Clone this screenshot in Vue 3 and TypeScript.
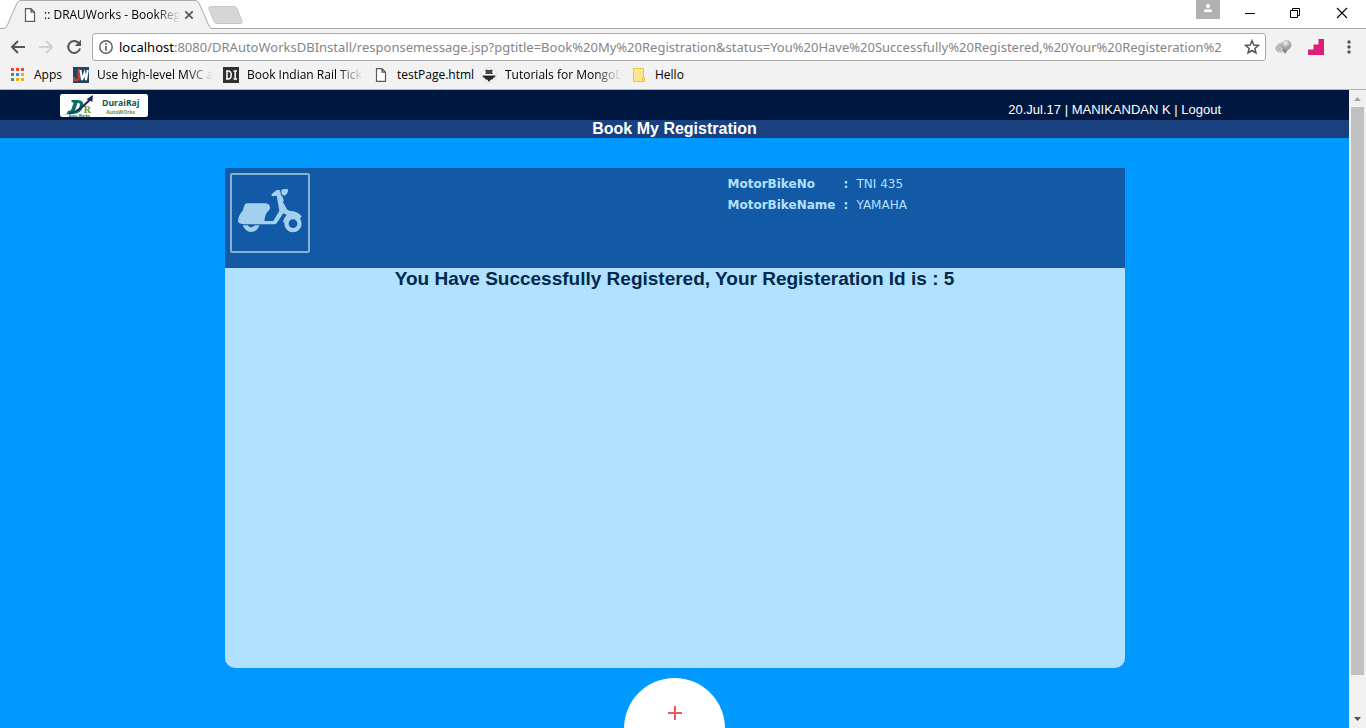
<script setup lang="ts">
interface Detail {
  label: string
  value: string
}

const address = {
  host: 'localhost',
  rest: ':8080/DRAutoWorksDBInstall/responsemessage.jsp?pgtitle=Book%20My%20Registration&status=You%20Have%20Successfully%20Registered,%20Your%20Registeration%2',
}

const details: Detail[] = [
  { label: 'MotorBikeNo', value: 'TNI 435' },
  { label: 'MotorBikeName', value: 'YAMAHA' },
]

const appDots = ['#ea4335', '#ea4335', '#ea4335', '#34a05a', '#2d8cf0', '#f9ab00', '#34a05a', '#f9ab00', '#f9ab00']
</script>

<template>
  <div class="window">
    <header class="tabs">
      <div class="tab">
        <svg class="tab-shape" viewBox="0 0 212 29" width="212" height="29" aria-hidden="true">
          <path d="M0 28.5H3Q6 28.5 7 26L17 3Q18 .5 21 .5H195Q198 .5 199 3L209 26Q210 28.5 212 28.5V29H0Z" fill="#f2f2f2" />
          <path d="M0 28.5H3Q6 28.5 7 26L17 3Q18 .5 21 .5H195Q198 .5 199 3L209 26Q210 28.5 212 28.5" fill="none" stroke="#a9a9a9" />
        </svg>
        <svg class="page-icon" viewBox="0 0 12 14" width="12" height="14" aria-hidden="true"><path d="M1.5.7H7L10.5 4.2V13.3H1.5ZM7 .7V4.2H10.5" fill="#fff" stroke="#5a5a5a" stroke-width="1.2" /></svg>
        <span class="tab-title">:: DRAUWorks - BookReg</span>
        <button class="tab-close" aria-label="Close tab">
          <svg viewBox="0 0 10 10" width="10" height="10"><path d="M1.3 1.3L8.7 8.7M8.7 1.3L1.3 8.7" stroke="#5a5a5a" stroke-width="1.8" /></svg>
        </button>
      </div>
      <button class="new-tab" aria-label="New tab">
        <svg viewBox="0 0 36 18" width="36" height="18"><path d="M3 .5H26Q28 .5 29 2.500L34 15Q35 17.500 32 17.500H9Q7 17.500 6 15.500L1 3Q0 .5 3 .5Z" fill="#d6d6d6" stroke="#c6c6c6" /></svg>
      </button>
      <div class="window-buttons">
        <button class="user" aria-label="Profile">
          <svg viewBox="0 0 24 19" width="24" height="19"><circle cx="12" cy="6" r="2.100" fill="#fff" /><path d="M8 12V10.800Q8 9 12 9T16 10.800V12Z" fill="#fff" /></svg>
        </button>
        <button class="control" aria-label="Minimize"><svg viewBox="0 0 12 12" width="12" height="12"><path d="M1 6.500H11" stroke="#000" /></svg></button>
        <button class="control" aria-label="Restore"><svg viewBox="0 0 12 12" width="12" height="12"><path d="M1.500 3.500H8.500V10.500H1.500ZM3.500 3V1.500H10.500V8.500H9" fill="none" stroke="#000" /></svg></button>
        <button class="control" aria-label="Close"><svg viewBox="0 0 12 12" width="12" height="12"><path d="M1 1L11 11M11 1L1 11" stroke="#000" stroke-width="1.100" /></svg></button>
      </div>
    </header>

    <div class="toolbar">
      <button class="nav" aria-label="Back"><svg viewBox="0 0 16 16" width="16" height="16"><path d="M15 8H2.500M8 2L2 8L8 14" fill="none" stroke="#555" stroke-width="2" /></svg></button>
      <button class="nav" aria-label="Forward"><svg viewBox="0 0 16 16" width="16" height="16"><path d="M1 8H13.500M8 2L14 8L8 14" fill="none" stroke="#d0d0d0" stroke-width="2" /></svg></button>
      <button class="nav" aria-label="Reload"><svg viewBox="0 0 16 16" width="16" height="16"><path d="M12.600 3.800A6 6 0 1 0 14 9.500" fill="none" stroke="#555" stroke-width="2" /><path d="M15 .8V7H8.800Z" fill="#555" /></svg></button>
      <div class="omnibox">
        <svg class="info" viewBox="0 0 14 14" width="14" height="14" aria-hidden="true"><circle cx="7" cy="7" r="6.200" fill="none" stroke="#5a5a5a" stroke-width="1.400" /><path d="M7 6V10.800M7 3.200V4.900" stroke="#5a5a5a" stroke-width="1.600" /></svg>
        <div class="url"><span class="host">{{ address.host }}</span>{{ address.rest }}</div>
        <button class="star" aria-label="Bookmark this page"><svg viewBox="0 0 16 16" width="16" height="16"><path d="M8 1.700L9.800 6L14.400 6.400L10.900 9.400L12 14L8 11.500L4 14L5.100 9.400L1.600 6.400L6.200 6Z" fill="none" stroke="#555" stroke-width="1.500" /></svg></button>
      </div>
      <button class="extension" aria-label="Extension">
        <svg viewBox="0 0 18 16" width="18" height="16">
          <defs><radialGradient id="ball" cx=".4" cy=".3"><stop offset="0" stop-color="#f4f4f4" /><stop offset="1" stop-color="#a0a0a0" /></radialGradient></defs>
          <ellipse cx="6.500" cy="8.500" rx="5.800" ry="4.300" transform="rotate(-22 6.500 8.500)" fill="#c8c8c8" stroke="#a5a5a5" stroke-width=".7" />
          <path d="M2 9.500Q5 5 9 7M3 11Q6 7 10 9" fill="none" stroke="#999" stroke-width=".8" />
          <path d="M7 10L10 15L13.500 10Z" fill="#858585" /><circle cx="11.500" cy="6" r="4.900" fill="url(#ball)" />
        </svg>
      </button>
      <button class="extension stairs" aria-label="Steps extension"><svg viewBox="0 0 16 16" width="16" height="16"><path d="M0 16V10.500H5.500V5.500H10.500V0H16V16Z" fill="#db1f78" /></svg></button>
      <button class="menu" aria-label="Menu"><svg viewBox="0 0 4 14" width="4" height="14"><circle cx="2" cy="2" r="1.700" fill="#555" /><circle cx="2" cy="7" r="1.700" fill="#555" /><circle cx="2" cy="12" r="1.700" fill="#555" /></svg></button>
    </div>

    <nav class="bookmarks" aria-label="Bookmarks">
      <a class="bookmark apps" href="#">
        <svg viewBox="0 0 13 13" width="13" height="13" aria-hidden="true"><rect v-for="(color, i) in appDots" :key="i" :x="(i % 3) * 5" :y="Math.floor(i / 3) * 5" width="3" height="3" :fill="color" /></svg>
        <span>Apps</span>
      </a>
      <a class="bookmark mvc" href="#">
        <svg viewBox="0 0 16 16" width="16" height="16" aria-hidden="true"><rect width="16" height="16" fill="#1f4664" /><path d="M1.200 10V13H3.800Q5.800 13 5.800 10.500V2" fill="none" stroke="#cf3c36" stroke-width="2.200" /><path d="M7.500 3L9 13L11.500 6L13 13L14.800 3" fill="none" stroke="#fff" stroke-width="2" /></svg>
        <span class="clip">Use high-level MVC a</span>
      </a>
      <a class="bookmark rail" href="#">
        <svg viewBox="0 0 16 16" width="16" height="16" aria-hidden="true"><rect width="16" height="16" fill="#303030" /><path d="M3 4H5Q8.200 4 8.200 8T5 12H3M4 4V12M10.500 4H14M12.200 4V12M10.500 12H14" fill="none" stroke="#fff" stroke-width="1.500" /></svg>
        <span class="clip">Book Indian Rail Ticke</span>
      </a>
      <a class="bookmark test" href="#">
        <svg viewBox="0 0 12 14" width="12" height="14" aria-hidden="true"><path d="M1.500.7H7L10.500 4.200V13.300H1.500ZM7 .7V4.200H10.500" fill="#fff" stroke="#5a5a5a" stroke-width="1.200" /></svg>
        <span>testPage.html</span>
      </a>
      <a class="bookmark mongo" href="#">
        <svg viewBox="0 0 16 16" width="16" height="16" aria-hidden="true"><circle cx="8" cy="8" r="7.500" fill="#fff" stroke="#ccc" stroke-width=".5" /><path d="M4 3.500L5.500 2.500L8 3L10.500 2.500L12 3.500L11 5L12 7H4L5 5Z" fill="#444" /><path d="M1.500 8.500H14.500L14 10.500H12.800L11.500 12.500H10L8 15L6 12.500H4.500L3.200 10.500H2Z" fill="#292929" /></svg>
        <span class="clip">Tutorials for MongoD</span>
      </a>
      <a class="bookmark hello" href="#">
        <svg viewBox="0 0 12 14" width="12" height="14" aria-hidden="true"><path d="M.5.5H10.500V10H11.500V13.500H.5Z" fill="#ffe58f" stroke="#e9c643" /><path d="M9.500 13V9.500H11.500" fill="none" stroke="#e9c643" /></svg>
        <span>Hello</span>
      </a>
    </nav>

    <div class="viewport">
      <div class="page">
        <div class="topbar">
          <svg class="logo" viewBox="60 24 264 69" width="88" height="23" role="img" aria-label="DuraiRaj AutoWorks">
            <rect x="60" y="24" width="264" height="69" rx="7" fill="#fff" />
            <path d="M95 42H112Q134 42 129 62Q123 83 98 84H80L84 75L93 73L101 50L94 48ZM113 50L104 76Q115 76 119 61Q122 50 113 50Z" fill="#08715c" fill-rule="evenodd" />
            <text class="logo-r" x="131" y="82">R</text>
            <path d="M64 88Q108 82 145 41L139 40L159 27L157 48L151 44Q114 86 64 88Z" fill="#25206d" />
            <text class="logo-small" x="86" y="92">Auto Works</text>
            <text class="logo-name" x="186" y="59">DuraiRaj</text>
            <text class="logo-sub" x="199" y="85">AutoWOrks</text>
          </svg>
          <div class="account">20.Jul.17 | MANIKANDAN K | <a href="#">Logout</a></div>
        </div>
        <h1 class="page-title">Book My Registration</h1>
        <main class="card">
          <section class="vehicle">
            <svg class="scooter" viewBox="30 39 240 240" width="80" height="80" role="img" aria-label="Scooter">
              <rect x="33" y="42" width="234" height="234" rx="4" fill="none" stroke="#84b2cf" stroke-width="6" />
              <g fill="#a3d0ef">
                <path d="M73 137Q74 130 82 130H139Q151 134 150 143Q149 150 144 154Q138 160 135 171L133 183H160L178 152L170 107L158 109Q152 106 156 101L169 91Q176 87 180 92L183 105Q195 116 189 127L202 149L208 152Q233 153 245 169Q243 178 233 174Q207 164 192 190Q187 185 192 176L200 164L190 160L170 190Q168 193 163 193H74Q54 192 54 184Q55 166 69 151Q69 144 73 137Z" />
                <path d="M184 90Q191 86 204 88Q206 100 194 107Q185 105 184 99Z" />
                <path d="M68 196H83Q92 208 105 196H118Q112 216 93 216Q76 215 68 196Z" />
              </g>
              <circle cx="219" cy="191" r="19.500" fill="#125aa5" stroke="#a3d0ef" stroke-width="13" />
            </svg>
            <table class="details">
              <tbody>
                <tr v-for="item in details" :key="item.label">
                  <th scope="row">{{ item.label }}</th>
                  <td class="colon">:</td>
                  <td>{{ item.value }}</td>
                </tr>
              </tbody>
            </table>
          </section>
          <h2 class="message">You Have Successfully Registered, Your Registeration Id is : 5</h2>
        </main>
        <button class="add" aria-label="Add">
          <svg viewBox="0 0 14 14" width="14" height="14"><path d="M0 7H14M7 0V14" stroke="#f05a5f" stroke-width="2" /></svg>
        </button>
      </div>
      <div class="scrollbar" aria-hidden="true">
        <svg viewBox="0 0 17 17" width="17" height="17"><path d="M5 11L8.500 7L12 11Z" fill="#a3a3a3" /></svg>
        <div class="track"><div class="thumb"></div></div>
        <svg viewBox="0 0 17 17" width="17" height="17"><path d="M5 6L8.500 10L12 6Z" fill="#505050" /></svg>
      </div>
    </div>
  </div>
</template>

<style>
body {
  margin: 0;
  overflow: hidden;
}
</style>

<style scoped>
* {
  box-sizing: border-box;
}

.window {
  display: flex;
  flex-direction: column;
  height: 100vh;
  overflow: hidden;
  background: #f2f2f2;
  font-family: "Open Sans", "Noto Sans", sans-serif;
  font-size: 12px;
  color: #000;
}

button {
  display: flex;
  align-items: center;
  justify-content: center;
  padding: 0;
  border: 0;
  background: none;
}

svg {
  display: block;
  flex: none;
}

a {
  color: inherit;
  text-decoration: none;
}

.tabs {
  display: flex;
  flex: none;
  height: 29px;
  background: #fff;
  border-bottom: 1px solid #a9a9a9;
}

.tab {
  position: relative;
  display: flex;
  align-items: center;
  width: 212px;
  height: 29px;
  padding-left: 24px;
}

.tab-shape {
  position: absolute;
  inset: 0;
}

.page-icon {
  position: relative;
}

.tab-title {
  position: relative;
  width: 136px;
  margin-left: 8px;
  white-space: nowrap;
  mask-image: linear-gradient(to right, #000 112px, transparent);
}

.tab-close {
  position: relative;
  margin-left: 4px;
}

.new-tab {
  align-self: flex-start;
  margin: 6px 0 0 -4px;
}

.window-buttons {
  display: flex;
  margin-left: auto;
}

.user {
  align-self: flex-start;
  height: 19px;
  margin-right: 7px;
  background: #b1b1b1;
}

.control {
  width: 45px;
  height: 26px;
}

.control:last-child {
  width: 49px;
}

.toolbar {
  display: flex;
  flex: none;
  align-items: center;
  height: 36px;
  padding: 0 15px 0 10px;
}

.nav {
  width: 16px;
  margin-right: 12px;
}

.nav:nth-child(3) {
  margin-right: 10px;
}

.omnibox {
  display: flex;
  flex: 1;
  align-items: center;
  min-width: 0;
  height: 28px;
  padding: 0 5px 0 6px;
  background: #fff;
  border: 1px solid #a9a9a9;
  border-radius: 3px;
}

.url {
  flex: 1;
  min-width: 0;
  margin: 0 8px 0 6px;
  overflow: hidden;
  white-space: nowrap;
  font-family: "Noto Sans", sans-serif;
  font-size: 13px;
  line-height: 20px;
  color: #858585;
}

.host {
  color: #000;
}

.extension {
  width: 18px;
  margin-left: 9px;
}

.stairs {
  width: 16px;
  margin-left: 15px;
}

.menu {
  margin-left: 23px;
}

.bookmarks {
  display: flex;
  flex: none;
  align-items: center;
  height: 25px;
  padding: 0 11px 5px;
  border-bottom: 1px solid #b4b4b4;
  line-height: 18px;
  white-space: nowrap;
}

.bookmark {
  display: flex;
  align-items: center;
  gap: 8px;
  margin-right: 10px;
}

.bookmark .clip {
  flex: none;
  width: 116px;
  mask-image: linear-gradient(to right, #000 90px, transparent);
}

.apps {
  gap: 10px;
  width: 52px;
}

.test {
  gap: 10px;
  width: 96px;
  margin-left: 2px;
}

.mongo {
  margin-right: 12px;
}

.hello {
  gap: 10px;
}

.viewport {
  display: flex;
  flex: 1;
  min-height: 0;
}

.page {
  display: flex;
  flex: 1;
  flex-direction: column;
  align-items: center;
  overflow: hidden;
  background: #0099ff;
  font-family: "Liberation Sans", Arial, sans-serif;
}

.topbar {
  display: flex;
  flex: none;
  align-items: flex-start;
  justify-content: space-between;
  width: 100%;
  height: 30px;
  padding: 4px 128px 0 60px;
  background: #001840;
}

.logo-r {
  font: bold 30px "Liberation Serif", serif;
  fill: #6a961f;
}

.logo-small {
  font: bold 11px "Open Sans", sans-serif;
  fill: #08715c;
}

.logo-name {
  font: bold 26px "Open Sans", sans-serif;
  fill: #08594e;
}

.logo-sub {
  font: bold 15px "Open Sans", sans-serif;
  fill: #65911f;
}

.account {
  padding-top: 8px;
  font-size: 13px;
  line-height: 16px;
  color: #fff;
}

.page-title {
  flex: none;
  width: 100%;
  margin: 0;
  background: #1a417f;
  color: #fff;
  font-size: 16px;
  line-height: 18px;
  text-align: center;
}

.card {
  flex: none;
  width: 900px;
  max-width: 100%;
  min-height: 500px;
  margin: 30px 0 10px;
  overflow: hidden;
  background: #b2e0ff;
  border-radius: 0 0 10px 10px;
}

.vehicle {
  display: grid;
  grid-template-columns: 5fr 4fr;
  column-gap: 8px;
  align-items: start;
  height: 100px;
  padding: 5px;
  background: #125aa5;
}

.details {
  margin-top: 1px;
  border-collapse: collapse;
  color: #b2e0ff;
  font-family: "DejaVu Sans", Verdana, sans-serif;
  font-size: 12px;
  line-height: 21px;
  justify-self: start;
}

.details th,
.details td {
  padding: 0;
  text-align: left;
}

.details th {
  width: 116px;
}

.details .colon {
  width: 13px;
  font-weight: bold;
}

.message {
  margin: 0;
  color: #00294d;
  font-size: 19px;
  line-height: 22px;
  text-align: center;
}

.add {
  flex: none;
  width: 101px;
  height: 101px;
  padding-bottom: 31px;
  background: #fff;
  border-radius: 50%;
}

.scrollbar {
  display: flex;
  flex: none;
  flex-direction: column;
  width: 17px;
  background: #f1f1f1;
}

.track {
  flex: 1;
  padding: 0 2px;
}

.thumb {
  height: 94%;
  background: #c1c1c1;
}
</style>
